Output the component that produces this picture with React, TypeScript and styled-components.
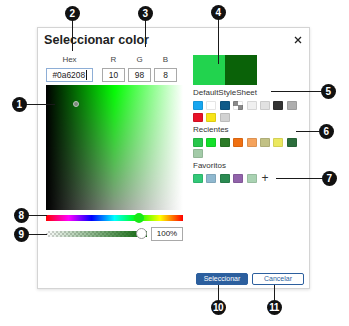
import React from "react";
import styled, { createGlobalStyle } from "styled-components";

const GlobalStyle = createGlobalStyle`
  html, body { margin: 0; padding: 0; background: #ffffff; }
  body { font-family: "Liberation Sans", Arial, sans-serif; color: #333; }
  * { box-sizing: border-box; }
`;

const Stage = styled.div`
  position: relative;
  width: 349px;
  height: 326px;
  padding: 27px 0 0 37px;
  overflow: hidden;
`;

const Dialog = styled.div`
  width: 273px;
  height: 262px;
  border: 1px solid #d4d4d4;
  box-shadow: 0 1px 3px rgba(0, 0, 0, 0.12);
  background: #fff;
  display: flex;
  flex-direction: column;
`;

const Header = styled.div`
  height: 24px;
  display: flex;
  align-items: center;
  justify-content: space-between;
  padding: 0 7px 0 6px;
`;

const Title = styled.div`
  font-size: 12.6px;
  font-weight: bold;
  color: #222;
  line-height: 15px;
`;

const CloseButton = styled.div`
  width: 9px;
  height: 9px;
  display: flex;
  align-items: center;
  justify-content: center;
`;

const Body = styled.div`
  display: flex;
  gap: 10px;
  padding-left: 8px;
`;

const LeftCol = styled.div`
  width: 137px;
  display: flex;
  flex-direction: column;
`;

const RightCol = styled.div`
  width: 104px;
  display: flex;
  flex-direction: column;
`;

const FieldGrid = styled.div<{ $mt: number }>`
  display: grid;
  grid-template-columns: 53px 23px 23px 23px;
  column-gap: 3px;
  margin-top: ${(p) => p.$mt}px;
  & > :first-child { margin-right: 6px; }
`;

const FieldLabel = styled.div`
  font-size: 8px;
  line-height: 10px;
  height: 10px;
  text-align: center;
  color: #444;
`;

const Field = styled.div<{ $focus?: boolean }>`
  height: 14px;
  border: 1px solid ${(p) => (p.$focus ? "#8eaed6" : "#a9a9a9")};
  font-size: 8.4px;
  line-height: 12px;
  text-align: center;
  color: #222;
  display: flex;
  align-items: center;
  justify-content: center;
`;

const Caret = styled.span`
  display: inline-block;
  width: 1px;
  height: 10px;
  background: #111;
  margin-left: 0.5px;
`;

const SLPlane = styled.div`
  position: relative;
  margin-top: 3px;
  height: 125px;
  background: linear-gradient(to right, #000 0%, #00ff00 50%, #ffffff 100%);
  &::after {
    content: "";
    position: absolute;
    inset: 0;
    background: linear-gradient(to right, #000 0%, #8a9488 50%, #ffffff 100%);
    -webkit-mask-image: linear-gradient(to bottom, transparent 0%, #000 100%);
    mask-image: linear-gradient(to bottom, transparent 0%, #000 100%);
  }
`;

const PlaneCursor = styled.div`
  position: absolute;
  z-index: 1;
  left: 27px;
  top: 16px;
  width: 6px;
  height: 6px;
  border-radius: 50%;
  background: #7e8a7e;
  border: 1px solid #b9c4b9;
`;

const HueBar = styled.div`
  position: relative;
  margin-top: 5px;
  height: 6px;
  background: linear-gradient(
    to right,
    #ff0000 0%,
    #ff00ff 16.6%,
    #0000ff 33.3%,
    #00ffff 50%,
    #00ff00 66.6%,
    #ffff00 83.3%,
    #ff0000 100%
  );
`;

const HueThumb = styled.div`
  position: absolute;
  left: 88px;
  top: -2px;
  width: 10px;
  height: 10px;
  border-radius: 50%;
  background: #18e818;
`;

const AlphaRow = styled.div`
  margin-top: 6px;
  height: 14px;
  display: flex;
  align-items: center;
  gap: 4px;
`;

const AlphaBar = styled.div`
  position: relative;
  flex: 1;
  height: 6.5px;
  background:
    linear-gradient(to right, rgba(10, 98, 8, 0) 0%, #0a6208 100%),
    repeating-conic-gradient(#d4d4d4 0 25%, #ffffff 0 50%) 0 0 / 4px 4px;
`;

const AlphaThumb = styled.div`
  position: absolute;
  right: 0;
  top: -2.5px;
  width: 11px;
  height: 11px;
  border-radius: 50%;
  background: #fff;
  border: 1px solid #9a9a9a;
`;

const AlphaField = styled(Field)`
  width: 32px;
  font-size: 8px;
`;

const Preview = styled.div`
  margin-top: 3px;
  width: 64px;
  height: 30px;
  display: flex;
`;

const PreviewHalf = styled.div<{ $c: string }>`
  flex: 1;
  background: ${(p) => p.$c};
`;

const SectionLabel = styled.div`
  margin-top: 3px;
  font-size: 8px;
  line-height: 10px;
  color: #333;
`;

const SwatchGrid = styled.div`
  margin-top: 3px;
  display: grid;
  grid-template-columns: repeat(8, 10px);
  grid-auto-rows: 9px;
  column-gap: 3.4px;
  row-gap: 2.5px;
`;

const Swatch = styled.div<{ $c: string }>`
  background: ${(p) => p.$c};
  border-radius: 1px;
  box-shadow: inset 0 0 0 1px rgba(0, 0, 0, 0.1);
`;

const CheckerSwatch = styled.div`
  border-radius: 1px;
  box-shadow: inset 0 0 0 1px rgba(0, 0, 0, 0.1);
  background: conic-gradient(#ffffff 0 25%, #8a8a8a 0 50%, #ffffff 0 75%, #8a8a8a 0);
`;

const AddSwatch = styled.div`
  font-size: 12px;
  line-height: 9px;
  color: #333;
  text-align: center;
`;

const Footer = styled.div`
  margin-top: auto;
  display: flex;
  justify-content: flex-end;
  gap: 4px;
  padding: 0 5px 3px 0;
`;

const Button = styled.div<{ $primary?: boolean }>`
  width: 52px;
  height: 12px;
  border-radius: 2px;
  border: 1px solid #2c5f9e;
  background: ${(p) => (p.$primary ? "#2c5f9e" : "#ffffff")};
  color: ${(p) => (p.$primary ? "#ffffff" : "#2c5f9e")};
  font-size: 7px;
  line-height: 10px;
  text-align: center;
`;

const Marker = styled.div<{ $x: number; $y: number }>`
  position: absolute;
  left: ${(p) => p.$x - 7.5}px;
  top: ${(p) => p.$y - 7.5}px;
  width: 15px;
  height: 15px;
  border-radius: 50%;
  background: #111;
  color: #fff;
  font-weight: bold;
  font-size: 10px;
  line-height: 15px;
  text-align: center;
  letter-spacing: -0.5px;
`;

const Leader = styled.div<{ $x: number; $y: number; $w: number; $h: number }>`
  position: absolute;
  left: ${(p) => p.$x}px;
  top: ${(p) => p.$y}px;
  width: ${(p) => p.$w}px;
  height: ${(p) => p.$h}px;
  background: #1a1a1a;
`;

const defaults = [
  "#17a6f0",
  "#ffffff",
  "#0f5a88",
  "checker",
  "#f0f0f0",
  "#e1e1e1",
  "#333333",
  "#aeaeae",
  "#e81228",
  "#f7e419",
  "#d2d2d2",
];
const recents = [
  "#27c64a",
  "#14e02a",
  "#2b7a26",
  "#f07012",
  "#f5a35c",
  "#c2c185",
  "#ebe85f",
  "#2c6e3c",
  "#a3cba8",
];
const favorites = ["#32c878", "#8fb8cf", "#2b8a52", "#9163aa", "#a9d2b2"];

const callouts = [
  { n: "1", x: 19, y: 104 },
  { n: "2", x: 72, y: 13 },
  { n: "3", x: 145, y: 13 },
  { n: "4", x: 218, y: 12 },
  { n: "5", x: 328, y: 91 },
  { n: "6", x: 326, y: 131 },
  { n: "7", x: 329, y: 178 },
  { n: "8", x: 21, y: 215 },
  { n: "9", x: 21, y: 234 },
  { n: "10", x: 218, y: 307 },
  { n: "11", x: 274, y: 307 },
];

const leaders = [
  { x: 24, y: 103.5, w: 31, h: 1.3 },
  { x: 71.5, y: 18, w: 1.3, h: 33 },
  { x: 144.5, y: 18, w: 1.3, h: 29 },
  { x: 217.5, y: 17, w: 1.3, h: 47 },
  { x: 271, y: 90.5, w: 52, h: 1.3 },
  { x: 296, y: 130.5, w: 25, h: 1.3 },
  { x: 276, y: 177.5, w: 48, h: 1.3 },
  { x: 26, y: 215, w: 21, h: 1.3 },
  { x: 26, y: 233.5, w: 21, h: 1.3 },
  { x: 217.5, y: 285, w: 1.3, h: 17 },
  { x: 273.5, y: 285, w: 1.3, h: 17 },
];

export default function App() {
  return (
    <>
      <GlobalStyle />
      <Stage>
        <Dialog>
          <Header>
            <Title>Seleccionar color</Title>
            <CloseButton>
              <svg width="8" height="8" viewBox="0 0 8 8">
                <path d="M1 1 L7 7 M7 1 L1 7" stroke="#222" strokeWidth="1.3" />
              </svg>
            </CloseButton>
          </Header>
          <Body>
            <LeftCol>
              <FieldGrid $mt={3}>
                <FieldLabel>Hex</FieldLabel>
                <FieldLabel>R</FieldLabel>
                <FieldLabel>G</FieldLabel>
                <FieldLabel>B</FieldLabel>
              </FieldGrid>
              <FieldGrid $mt={3}>
                <Field $focus>
                  #0a6208
                  <Caret />
                </Field>
                <Field>10</Field>
                <Field>98</Field>
                <Field>8</Field>
              </FieldGrid>
              <SLPlane>
                <PlaneCursor />
              </SLPlane>
              <HueBar>
                <HueThumb />
              </HueBar>
              <AlphaRow>
                <AlphaBar>
                  <AlphaThumb />
                </AlphaBar>
                <AlphaField>100%</AlphaField>
              </AlphaRow>
            </LeftCol>
            <RightCol>
              <Preview>
                <PreviewHalf $c="#22d34e" />
                <PreviewHalf $c="#0a6208" />
              </Preview>
              <SectionLabel>DefaultStyleSheet</SectionLabel>
              <SwatchGrid>
                {defaults.map((c, i) =>
                  c === "checker" ? <CheckerSwatch key={i} /> : <Swatch key={i} $c={c} />
                )}
              </SwatchGrid>
              <SectionLabel>Recientes</SectionLabel>
              <SwatchGrid>
                {recents.map((c, i) => (
                  <Swatch key={i} $c={c} />
                ))}
              </SwatchGrid>
              <SectionLabel>Favoritos</SectionLabel>
              <SwatchGrid>
                {favorites.map((c, i) => (
                  <Swatch key={i} $c={c} />
                ))}
                <AddSwatch>+</AddSwatch>
              </SwatchGrid>
            </RightCol>
          </Body>
          <Footer>
            <Button $primary>Seleccionar</Button>
            <Button>Cancelar</Button>
          </Footer>
        </Dialog>
        {leaders.map((l, i) => (
          <Leader key={i} $x={l.x} $y={l.y} $w={l.w} $h={l.h} />
        ))}
        {callouts.map((c) => (
          <Marker key={c.n} $x={c.x} $y={c.y}>
            {c.n}
          </Marker>
        ))}
      </Stage>
    </>
  );
}
